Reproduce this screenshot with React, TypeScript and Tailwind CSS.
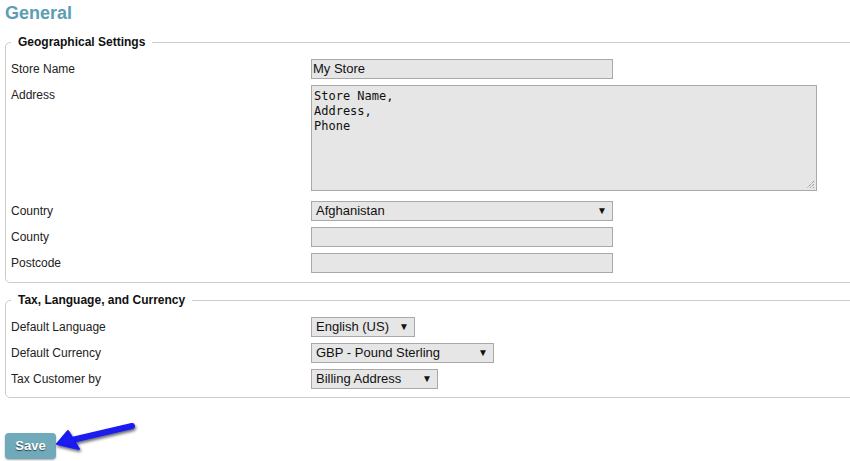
import React from 'react';

const Row: React.FC<{ label: string; children: React.ReactNode; className?: string }> = ({ label, children, className }) => (
  <div className={`flex items-start ${className ?? ''}`}>
    <div className="w-[300px] shrink-0 text-[12px] leading-[20px] text-[#222]">{label}</div>
    {children}
  </div>
);

const Select: React.FC<{ value: string; width: string }> = ({ value, width }) => (
  <div
    className={`${width} h-[20px] flex items-center justify-between border border-[#a9a9a9] bg-[#e6e6e6] pl-[4px] pr-[5px] text-[13px] text-[#111]`}
  >
    <span>{value}</span>
    <span className="text-[10px] leading-none">▼</span>
  </div>
);

const TextBox: React.FC<{ value?: string }> = ({ value }) => (
  <div className="w-[302px] h-[20px] border border-[#a9a9a9] bg-[#e6e6e6] px-[1px] text-[13px] leading-[18px] text-[#111]">
    {value}
  </div>
);

const App: React.FC = () => {
  return (
    <div className="relative w-full h-[461px] overflow-hidden bg-white font-['Liberation_Sans',Arial,sans-serif]">
      <div className="w-[920px] pl-[5px]">
        <h1 className="mt-[2px] h-[22px] text-[18px] leading-[22px] font-bold text-[#5b9eb4]">General</h1>

        <fieldset className="mt-[11px] border border-[#cccccc] rounded-[5px] px-[5px] pt-[10px] pb-[9px]">
          <legend className="px-[7px] text-[12px] leading-[14px] font-bold text-[#111]">Geographical Settings</legend>
          <Row label="Store Name">
            <TextBox value="My Store" />
          </Row>
          <Row label="Address" className="mt-[6px]">
            <div className="relative w-[506px] h-[106px] border border-[#a9a9a9] bg-[#e6e6e6] px-[2px] pt-[3px] font-['DejaVu_Sans_Mono',monospace] text-[12px] leading-[15px] text-[#111]">
              <div>Store Name,</div>
              <div>Address,</div>
              <div>Phone</div>
              <svg className="absolute right-[1px] bottom-[1px]" width="9" height="9" viewBox="0 0 9 9">
                <path d="M8 1 L1 8 M8 4 L4 8 M8 7 L7 8" stroke="#777" strokeWidth="1" strokeDasharray="1 1" />
              </svg>
            </div>
          </Row>
          <Row label="Country" className="mt-[10px]">
            <Select value="Afghanistan" width="w-[302px]" />
          </Row>
          <Row label="County" className="mt-[6px]">
            <TextBox />
          </Row>
          <Row label="Postcode" className="mt-[6px]">
            <TextBox />
          </Row>
        </fieldset>

        <fieldset className="mt-[10px] border border-[#cccccc] rounded-[5px] px-[5px] pt-[10px] pb-[8px]">
          <legend className="px-[7px] text-[12px] leading-[14px] font-bold text-[#111]">Tax, Language, and Currency</legend>
          <Row label="Default Language">
            <Select value="English (US)" width="w-[104px]" />
          </Row>
          <Row label="Default Currency" className="mt-[6px]">
            <Select value="GBP - Pound Sterling" width="w-[183px]" />
          </Row>
          <Row label="Tax Customer by" className="mt-[6px]">
            <Select value="Billing Address" width="w-[127px]" />
          </Row>
        </fieldset>

        <button className="mt-[35px] w-[51px] h-[26px] rounded-[4px] bg-[#6fa9ba] shadow-[0_1px_2px_rgba(0,0,0,0.35)] text-[13px] font-bold text-white [text-shadow:0_1px_1px_rgba(0,0,0,0.6)]">
          Save
        </button>
      </div>

      <svg className="absolute left-[52px] top-[415px]" width="95" height="45" viewBox="0 0 95 45">
        <defs>
          <filter id="sh" x="-20%" y="-30%" width="140%" height="160%">
            <feDropShadow dx="1" dy="2" stdDeviation="1.5" floodColor="#000" floodOpacity="0.6" />
          </filter>
        </defs>
        <g filter="url(#sh)" fill="#1a1aee" stroke="#1a1aee">
          <line x1="20" y1="25" x2="80" y2="11" strokeWidth="6" strokeLinecap="round" />
          <path d="M5 29 L16 16 L21 24 L27 34 Z" strokeWidth="2" strokeLinejoin="round" />
        </g>
      </svg>
    </div>
  );
};

export default App;
